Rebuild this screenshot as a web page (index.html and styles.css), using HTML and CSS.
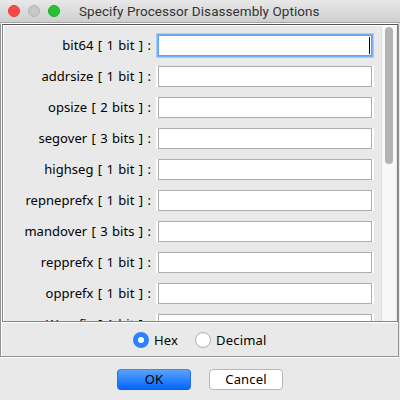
FILE: index.html
```
<!DOCTYPE html>
<html lang="en">
<head>
<meta charset="utf-8">
<title>Specify Processor Disassembly Options</title>
<link rel="stylesheet" href="styles.css">
</head>
<body>
<header class="titlebar">
  <span class="light close"></span><span class="light minimize"></span><span class="light zoom"></span>
  <h1>Specify Processor Disassembly Options</h1>
</header>
<main class="panel">
  <section class="scroller">
    <div class="rows">
      <div class="row"><label>bit64 [ 1 bit ] :</label><div class="field focused"><i class="caret"></i></div></div>
      <div class="row"><label>addrsize [ 1 bit ] :</label><div class="field"></div></div>
      <div class="row"><label>opsize [ 2 bits ] :</label><div class="field"></div></div>
      <div class="row"><label>segover [ 3 bits ] :</label><div class="field"></div></div>
      <div class="row"><label>highseg [ 1 bit ] :</label><div class="field"></div></div>
      <div class="row"><label>repneprefx [ 1 bit ] :</label><div class="field"></div></div>
      <div class="row"><label>mandover [ 3 bits ] :</label><div class="field"></div></div>
      <div class="row"><label>repprefx [ 1 bit ] :</label><div class="field"></div></div>
      <div class="row"><label>opprefx [ 1 bit ] :</label><div class="field"></div></div>
      <div class="row"><label>Wprefix [ 1 bit ] :</label><div class="field"></div></div>
    </div>
    <div class="track"><div class="thumb"></div></div>
  </section>
  <section class="radios">
    <span class="radio selected"></span><span class="hex">Hex</span>
    <span class="radio"></span><span class="decimal">Decimal</span>
  </section>
</main>
<footer class="actions">
  <div class="button primary">OK</div>
  <div class="button">Cancel</div>
</footer>
</body>
</html>
```
FILE: styles.css
```
* { box-sizing: border-box; }
body {
  margin: 0;
  width: 400px;
  height: 400px;
  overflow: hidden;
  background: #e9e9e9;
  color: #000;
  font: 13px/20px "Noto Sans", sans-serif;
}
.titlebar {
  display: flex;
  align-items: center;
  height: 23px;
  padding-left: 8px;
  border-bottom: 1px solid #a2a2a2;
  border-radius: 4px 4px 0 0;
  background: linear-gradient(#e8e8e8, #cfcfcf);
}
.light {
  width: 12px;
  height: 12px;
  margin-right: 8px;
  border-radius: 50%;
  border: 1px solid #b5b5b5;
  background: #c7c7c7;
}
.close { background: #fc4848; border-color: #e23d3e; }
.zoom { background: #28c131; border-color: #1fac27; }
h1 {
  margin: 0 0 1px 11px;
  font: 400 13.5px/20px Roboto, sans-serif;
  letter-spacing: 0.05px;
  color: #333;
  white-space: nowrap;
}
.panel {
  width: 399px;
  height: 334px;
  padding-left: 1px;
  border: 1px solid #929292;
  border-top-color: #fff;
  box-shadow: inset 1px 0 #fff, 0 1px #fff;
}
.scroller {
  display: flex;
  height: 298px;
  border: 1px solid #858585;
  border-top-color: #555;
  box-shadow: inset 1px 1px #fff, 0 1px #fff;
  overflow: hidden;
}
.rows {
  flex: 1;
  padding: 10px 0 0 0;
}
.row {
  display: flex;
  align-items: flex-start;
  height: 31px;
}
label {
  width: 148px;
  margin-right: 5px;
  text-align: right;
  white-space: pre;
  letter-spacing: 0.05px;
  word-spacing: 0.9px;
}
.field {
  position: relative;
  width: 214px;
  height: 21px;
  border: 1px solid #adadad;
  background: #fff;
  margin-left: 2px;
  box-shadow: -2px 0 #fff, 2px 0 #fff;
}
.field.focused {
  border-color: #65a0eb;
  box-shadow: 0 0 0 1px #78aff5, 0 0 0 2px #a9cdf8;
}
.caret {
  position: absolute;
  right: 1px;
  top: 1px;
  width: 1px;
  height: 17px;
  background: #000;
}
.track {
  width: 16px;
  margin-top: 1px;
  padding: 1px 0 0 3px;
  border-left: 1px solid #dedede;
  border-right: 1px solid #e9e9e9;
  background: #f8f8f8;
}
.thumb {
  width: 8px;
  height: 137px;
  border-radius: 4px;
  background: #b3b3b3;
}
.radios {
  display: flex;
  align-items: center;
  height: 34px;
  padding: 2px 0 0 131px;
}
.radio {
  width: 16px;
  height: 16px;
  border: 1px solid #aeaeae;
  border-radius: 50%;
  background: #fff;
}
.radio.selected {
  border: 5px solid #2b82fb;
}
.hex { width: 41px; margin-left: 5px; letter-spacing: 0.2px; }
.decimal { margin-left: 5px; letter-spacing: 0.2px; }
.actions {
  display: flex;
  gap: 18px;
  padding: 12px 0 0 117px;
}
.button {
  width: 74px;
  height: 21px;
  border: 1px solid #b5b5b5;
  border-radius: 4px;
  background: #fff;
  text-align: center;
  line-height: 19px;
  letter-spacing: 0.15px;
}
.primary {
  border-color: #3b8bf2 #2471eb #0a5bea;
  background: linear-gradient(#58a2fb, #0566ff);
}
```
